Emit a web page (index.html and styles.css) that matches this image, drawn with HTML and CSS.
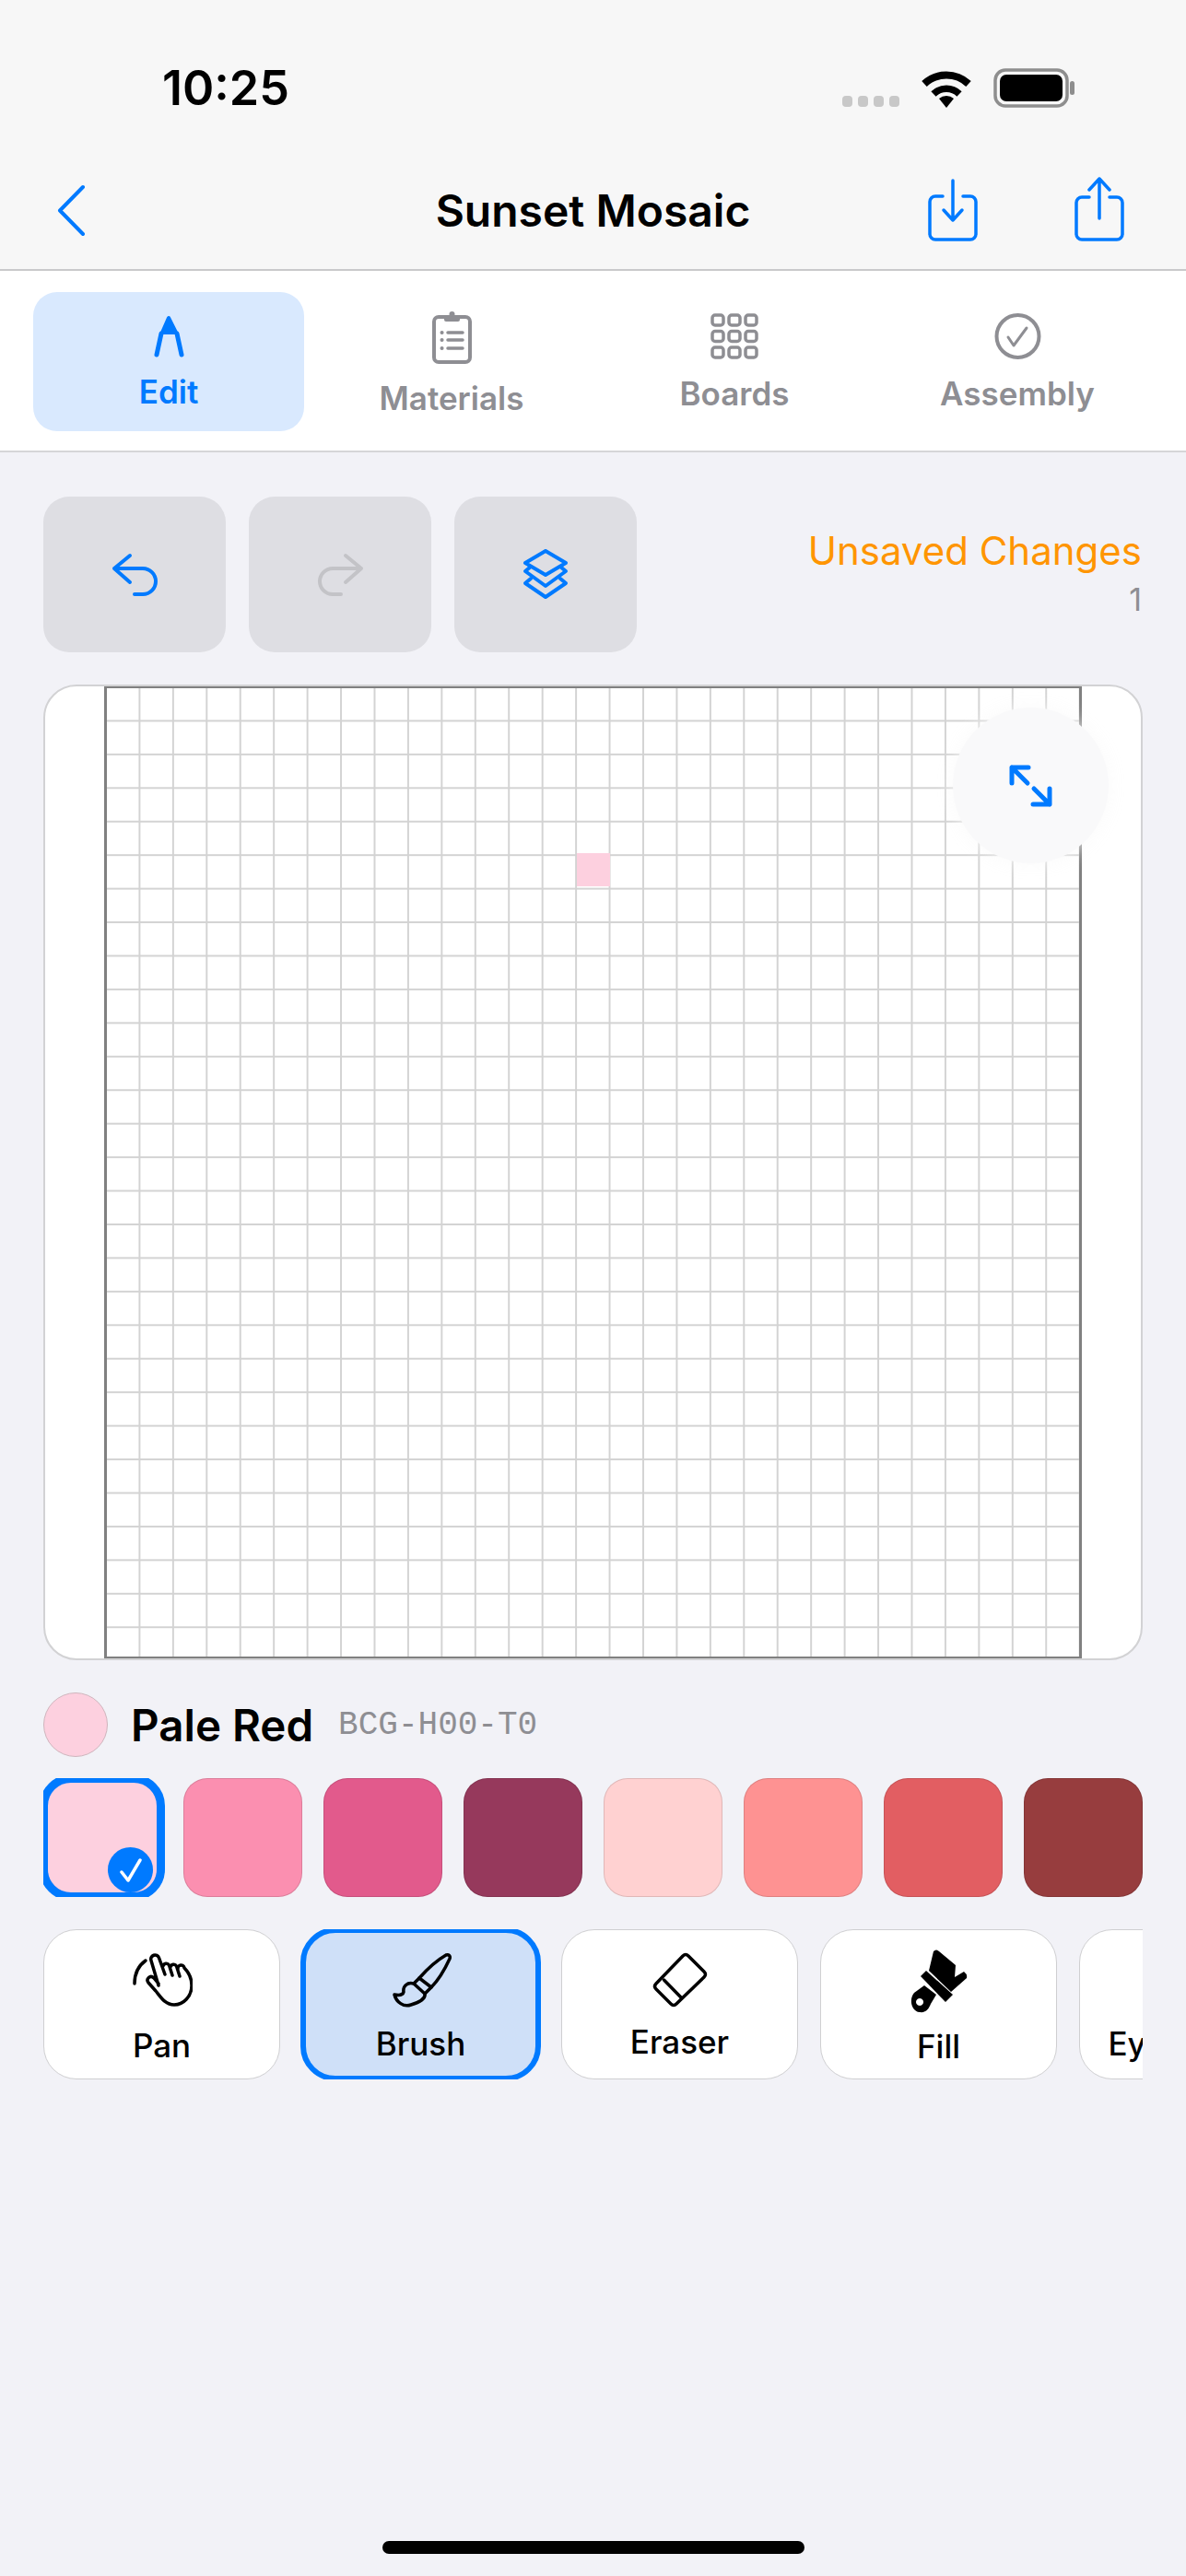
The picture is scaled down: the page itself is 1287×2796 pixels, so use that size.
FILE: index.html
```html
<!DOCTYPE html>
<html>
<head>
    <title>Sunset Mosaic</title>
    <link rel="stylesheet" href="styles.css">
</head>
<body>
    <div class="app">
        <header class="header">
            <div class="status">
                <span class="time">10:25</span>
                <div class="status-icons">
                    <div class="signal"><i></i><i></i><i></i><i></i></div>
                    <svg width="56" height="42" viewBox="0 0 56 42">
                        <path d="M4 16 A35 35 0 0 1 52 16" fill="none" stroke="#000" stroke-width="8"/>
                        <path d="M14 27 A20 20 0 0 1 42 27" fill="none" stroke="#000" stroke-width="7.500"/>
                        <path d="M28 42 L20 32 A12 12 0 0 1 36 32 Z"/>
                    </svg>
                    <svg width="90" height="43" viewBox="0 0 90 43">
                        <rect x="2" y="2" width="78" height="39" rx="11" fill="none" stroke="#8e8e8e" stroke-width="3.500"/>
                        <rect x="7" y="7" width="68" height="29" rx="7"/>
                        <rect x="83" y="14" width="5" height="15" rx="2.500" fill="#8e8e8e"/>
                    </svg>
                </div>
            </div>
            <nav class="nav">
                <div class="nav-left">
                    <svg class="blue-line" width="32" height="57" viewBox="0 0 32 57" stroke-width="4">
                        <path d="M29 3 L4 28.500 L29 54"/>
                    </svg>
                </div>
                <div class="title">Sunset Mosaic</div>
                <div class="nav-right">
                    <svg class="blue-line" width="58" height="70" viewBox="0 0 58 70" stroke-width="3.500">
                        <path d="M18 19 H10 a6 6 0 0 0 -6 6 V60 a6 6 0 0 0 6 6 H48 a6 6 0 0 0 6 -6 V25 a6 6 0 0 0 -6 -6 H40"/>
                        <path d="M29 2 V45 M19 34 L29 45 L39 34"/>
                    </svg>
                    <svg class="blue-line" width="58" height="72" viewBox="0 0 58 72" stroke-width="3.500">
                        <path d="M18 22 H10 a6 6 0 0 0 -6 6 V62 a6 6 0 0 0 6 6 H48 a6 6 0 0 0 6 -6 V28 a6 6 0 0 0 -6 -6 H40"/>
                        <path d="M29 45 V2 M18 14 L29 2 L40 14"/>
                    </svg>
                </div>
            </nav>
        </header>

        <div class="tabs">
            <div class="tab active">
                <svg width="36" height="46" viewBox="0 0 36 46" fill="#007aff" stroke="#007aff" stroke-linecap="round" stroke-linejoin="round">
                    <path d="M18 3 L11 19 H26 Z" stroke-width="4"/>
                    <path d="M10 20 L5 43 M27 20 L32 43" fill="none" stroke-width="5"/>
                </svg>
                <span>Edit</span>
            </div>
            <div class="tab">
                <svg class="gray-line" width="43" height="59" viewBox="0 0 43 59" stroke-width="4">
                    <rect x="2" y="8" width="39" height="49" rx="5"/>
                    <rect x="13" y="6" width="17" height="7" rx="2" fill="#8e8e93" stroke="none"/>
                    <circle cx="21.500" cy="5" r="3" fill="#8e8e93" stroke="none"/>
                    <path d="M17 25 H33 M17 33 H33 M17 42 H33" stroke-width="3.500"/>
                    <path d="M10.500 25 H10.600 M10.500 33 H10.600 M10.500 42 H10.600" stroke-width="4"/>
                </svg>
                <span>Materials</span>
            </div>
            <div class="tab">
                <svg class="gray-line" width="52" height="50" viewBox="0 0 52 50" stroke-width="3.500">
                    <rect x="2" y="2" width="12" height="11" rx="3"/>
                    <rect x="20" y="2" width="12" height="11" rx="3"/>
                    <rect x="38" y="2" width="12" height="11" rx="3"/>
                    <rect x="2" y="19.500" width="12" height="11" rx="3"/>
                    <rect x="20" y="19.500" width="12" height="11" rx="3"/>
                    <rect x="38" y="19.500" width="12" height="11" rx="3"/>
                    <rect x="2" y="37" width="12" height="11" rx="3"/>
                    <rect x="20" y="37" width="12" height="11" rx="3"/>
                    <rect x="38" y="37" width="12" height="11" rx="3"/>
                </svg>
                <span>Boards</span>
            </div>
            <div class="tab">
                <svg class="gray-line" width="51" height="50" viewBox="0 0 51 50" stroke-width="4">
                    <circle cx="25.500" cy="25" r="23"/>
                    <path d="M15 26 L21 35 L35 16" stroke-width="3"/>
                </svg>
                <span>Assembly</span>
            </div>
        </div>

        <main class="main">
            <div class="actions">
                <div class="action-buttons">
                    <button class="action">
                        <svg class="blue-line" width="51" height="48" viewBox="0 0 51 48" stroke-width="4">
                            <path d="M20 3 L3 17 L20 32 M3 17 H34 a14 14 0 0 1 0 28 H25"/>
                        </svg>
                    </button>
                    <button class="action">
                        <svg class="muted-line" width="51" height="48" viewBox="0 0 51 48" stroke-width="4">
                            <path d="M31 3 L48 17 L31 32 M48 17 H17 a14 14 0 0 0 0 28 H26"/>
                        </svg>
                    </button>
                    <button class="action">
                        <svg class="blue-line" width="50" height="55" viewBox="0 0 50 55" stroke-width="4">
                            <path d="M25 2 L47 15 L25 28 L3 15 Z"/>
                            <path d="M9 19 L3 24 L25 40 L47 24 L41 19"/>
                            <path d="M9 32 L3 37 L25 52 L47 37 L41 32"/>
                        </svg>
                    </button>
                </div>
                <div class="save-state">
                    <div class="unsaved">Unsaved Changes</div>
                    <div class="count">1</div>
                </div>
            </div>

            <div class="canvas-card">
                <div class="grid">
                    <div class="cell"></div>
                </div>
                <div class="expand">
                    <svg class="blue-line" width="50" height="48" viewBox="0 0 50 48" stroke-width="5">
                        <path d="M4 21 V4 H22 M4 4 L21 21"/>
                        <path d="M27 44 H45 V27 M28 27 L45 44"/>
                    </svg>
                </div>
            </div>

            <div class="color-info">
                <div class="color-dot"></div>
                <div class="color-name">Pale Red</div>
                <div class="color-code">BCG-H00-T0</div>
            </div>

            <div class="swatches">
                <div class="swatch selected">
                    <div class="check">
                        <svg width="26" height="28" viewBox="0 0 26 28" fill="none" stroke="#fff" stroke-width="3.500" stroke-linecap="round" stroke-linejoin="round">
                            <path d="M3 16 L10 25 L23 3"/>
                        </svg>
                    </div>
                </div>
                <div class="swatch s2"></div>
                <div class="swatch s3"></div>
                <div class="swatch s4"></div>
                <div class="swatch s5"></div>
                <div class="swatch s6"></div>
                <div class="swatch s7"></div>
                <div class="swatch s8"></div>
            </div>

            <div class="tools">
                <div class="tool tool-pan">
                    <svg class="black-line" width="66" height="60" viewBox="0 0 66 60" stroke-width="3.500">
                        <path d="M3 34 C3 22 8 14 15 9"/>
                        <path d="M29 36 L21 9 a4.500 4.500 0 0 1 8.500 -3 L36 24 M34 15 a3.500 3.500 0 0 1 6.500 -1 L44 25 M42 16 a3.500 3.500 0 0 1 6.500 -1 L52 26 M50 18 a3.500 3.500 0 0 1 7 -1 C62 22 65 29 65 36 C65 48 56 57 46 57 C36 57 31 48 26 42 L18 33 C15 29 20 24 24 28 L29 34"/>
                    </svg>
                    <span>Pan</span>
                </div>
                <div class="tool selected">
                    <svg class="black-line" width="66" height="60" viewBox="0 0 66 60" stroke-width="3.500">
                        <path d="M60 3 C63 2 65 4 64 7 C58 20 50 32 44 38 L31 28 C38 20 48 10 60 3 Z"/>
                        <path d="M31 28 L25 34 L37 45 L44 38"/>
                        <path d="M25 34 C18 32 13 37 14 43 C13 47 9 47 4 46 C6 54 14 60 22 57 C32 54 38 50 37 45"/>
                    </svg>
                    <span>Brush</span>
                </div>
                <div class="tool tool-eraser">
                    <svg class="black-line" width="60" height="60" viewBox="0 0 60 60" stroke-width="3.500">
                        <path d="M33 4 Q36 1 39 4 L56 21 Q59 24 56 27 L26 56 Q23 59 20 56 L4 40 Q1 37 4 34 Z"/>
                        <path d="M12.500 30 L31 49"/>
                    </svg>
                    <span>Eraser</span>
                </div>
                <div class="tool tool-fill">
                    <svg width="64" height="70" viewBox="0 0 64 70" fill-rule="evenodd">
                        <path d="M26 3 Q29 0 32 3 L50 18 L49 31 L59 25 Q63 28 62 32 L45 47 L21 24 Z"/>
                        <path d="M18 24 L12 30 L39 58 L47 50 Z"/>
                        <path d="M16 40 L5 48 C-1 55 2 68 11 69 C18 70 21 65 23 60 L29 50 Z M11 54 a4 4 0 1 0 0.100 0 Z"/>
                    </svg>
                    <span>Fill</span>
                </div>
                <div class="tool">
                    <svg class="black-line" width="60" height="60" viewBox="0 0 60 60" stroke-width="3.500">
                        <path d="M36 14 L6 44 L4 56 L16 54 L46 24 M32 10 L50 28 M42 4 L56 18"/>
                    </svg>
                    <span>Eyedropper</span>
                </div>
            </div>
        </main>

        <div class="home-bar"></div>
    </div>
</body>
</html>
```

FILE: styles.css
```css
* {
    box-sizing: border-box;
}
body {
    margin: 0;
    background: #f2f2f7;
    font-family: Inter, "Liberation Sans", sans-serif;
    color: #000;
}
svg {
    display: block;
    flex-shrink: 0;
}
.app {
    width: 1287px;
    height: 2796px;
    display: flex;
    flex-direction: column;
    overflow: hidden;
}
.blue-line,
.gray-line,
.muted-line,
.black-line {
    fill: none;
    stroke-linecap: round;
    stroke-linejoin: round;
}
.blue-line { stroke: #007aff; }
.gray-line { stroke: #8e8e93; }
.muted-line { stroke: #c3c3c7; }
.black-line { stroke: #000; }

/* header */
.header {
    height: 294px;
    background: #f7f7f7;
    border-bottom: 2px solid #c9c9cb;
}
.status {
    height: 178px;
    display: flex;
    justify-content: space-between;
    align-items: center;
    padding: 12px 119px 0 176px;
}
.time {
    font-size: 52px;
    font-weight: 600;
}
.status-icons {
    display: flex;
    align-items: flex-end;
    gap: 23px;
}
.signal {
    display: flex;
    gap: 6px;
    margin-bottom: 1px;
}
.signal i {
    display: block;
    width: 11px;
    height: 12px;
    border-radius: 4px;
    background: #c8c8c8;
}
.nav {
    height: 100px;
    display: grid;
    grid-template-columns: 1fr auto 1fr;
    align-items: center;
}
.nav-left {
    padding-left: 61px;
}
.title {
    font-size: 48px;
    font-weight: 600;
}
.nav-right {
    display: flex;
    justify-content: flex-end;
    align-items: flex-end;
    gap: 101px;
    padding-right: 65px;
}

/* tabs */
.tabs {
    height: 197px;
    display: flex;
    gap: 13px;
    padding: 23px 36px 0;
    background: #fff;
    border-bottom: 2px solid #d6d6d8;
}
.tab {
    width: 294px;
    height: 151px;
    display: flex;
    flex-direction: column;
    align-items: center;
    justify-content: center;
    gap: 17px;
    padding-top: 2px;
    border-radius: 26px;
    font-size: 35px;
    font-weight: 600;
    line-height: 40px;
    color: #8e8e93;
}
.tab.active {
    background: #d9e9fe;
    color: #007aff;
}

/* main */
.main {
    padding: 48px 47px 0;
}
.actions {
    display: flex;
    justify-content: space-between;
}
.action-buttons {
    display: flex;
    gap: 25px;
}
.action {
    width: 198px;
    height: 169px;
    padding: 0;
    border: none;
    border-radius: 28px;
    background: #dedee3;
    display: flex;
    align-items: center;
    justify-content: center;
}
.save-state {
    padding-top: 34px;
    padding-right: 1px;
    text-align: right;
}
.unsaved {
    font-size: 42px;
    line-height: 50px;
    color: #ff9500;
}
.count {
    margin-top: 6px;
    font-size: 34px;
    line-height: 44px;
    color: #8e8e93;
}
.canvas-card {
    position: relative;
    height: 1059px;
    margin-top: 35px;
    display: flex;
    justify-content: center;
    background: #fff;
    border: 2px solid #d2d2d4;
    border-radius: 36px;
    overflow: hidden;
}
.grid {
    position: relative;
    width: 1061px;
    height: 100%;
    border: 2px solid #808080;
    border-width: 2px 3px 2px 3px;
    background-color: #fff;
    background-image:
        linear-gradient(to right, #d3d3d3 2px, transparent 2px),
        linear-gradient(to bottom, #d3d3d3 2px, transparent 2px);
    background-size: 36.45px 36.45px;
    background-position: -2px -2px;
}
.cell {
    position: absolute;
    left: 510px;
    top: 179px;
    width: 36px;
    height: 36px;
    background: #fdd0df;
}
.expand {
    position: absolute;
    left: 985px;
    top: 23px;
    width: 169px;
    height: 169px;
    border-radius: 50%;
    background: #f9f9fa;
    box-shadow: 0 0 20px rgba(249, 249, 250, 0.9);
    display: flex;
    align-items: center;
    justify-content: center;
}

/* colour */
.color-info {
    margin-top: 35px;
    display: flex;
    align-items: center;
}
.color-dot {
    width: 70px;
    height: 70px;
    border-radius: 50%;
    background: #fdd0df;
    border: 1px solid #cfb5bd;
    margin-right: 25px;
}
.color-name {
    font-size: 47.500px;
    font-weight: 600;
    margin-right: 27px;
}
.color-code {
    font-family: "Liberation Mono", monospace;
    font-size: 36px;
    color: #8e8e93;
}
.swatches {
    margin-top: 23px;
    display: flex;
    gap: 23px;
    height: 129px;
    overflow: hidden;
}
.swatch {
    position: relative;
    width: 129px;
    height: 129px;
    flex-shrink: 0;
    border-radius: 26px;
    border: 1px solid rgba(0, 0, 0, 0.12);
}
.swatch.selected {
    width: 136px;
    height: 137px;
    margin: -4px -3px 0 -4px;
    background: #fdd0df;
    border: 9px solid #007aff;
    border-radius: 34px;
}
.s2 { background: #fb8fb0; }
.s3 { background: #e25a8c; }
.s4 { background: #96395c; }
.s5 { background: #ffd1d1; }
.s6 { background: #fe9292; }
.s7 { background: #e25e62; }
.s8 { background: #973d3e; }
.check {
    position: absolute;
    right: 4px;
    bottom: 0;
    width: 49px;
    height: 49px;
    border-radius: 50%;
    background: #007aff;
    display: flex;
    align-items: center;
    justify-content: center;
}

/* tools */
.tools {
    margin-top: 35px;
    display: flex;
    gap: 24px;
    overflow: hidden;
    height: 163px;
}
.tool {
    width: 257px;
    height: 163px;
    flex-shrink: 0;
    display: flex;
    flex-direction: column;
    align-items: center;
    gap: 20px;
    padding-top: 24px;
    background: #fff;
    border: 1px solid #cfcfd1;
    border-radius: 36px;
    font-size: 35px;
    font-weight: 500;
    line-height: 38px;
}
.tool-pan { gap: 22px; }
.tool-eraser { gap: 18px; }
.tool-fill {
    gap: 17px;
    padding-top: 20px;
}
.tool.selected {
    width: 261px;
    height: 167px;
    margin: -2px -2px 0;
    padding-top: 21px;
    background: #cfe0f8;
    border: 6px solid #007aff;
    border-radius: 38px;
}
.home-bar {
    width: 458px;
    height: 14px;
    margin: auto auto 24px;
    border-radius: 7px;
    background: #000;
}
```
